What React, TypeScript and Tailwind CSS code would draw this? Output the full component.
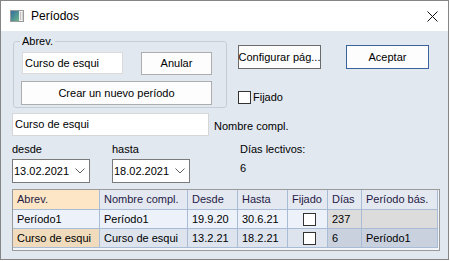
import React from "react";

const Chevron = () => (
  <svg width="10" height="6" viewBox="0 0 10 6" className="block">
    <path d="M0.5 0.5 L5 5 L9.5 0.5" fill="none" stroke="#606060" strokeWidth="1" />
  </svg>
);

const Box = () => <div className="w-[13px] h-[13px] border border-[#333333] bg-white" />;

const cols = ["Abrev.", "Nombre compl.", "Desde", "Hasta", "Fijado", "Días", "Período bás."];

export default function App() {
  const cell = "h-[19px] border-r border-b border-[#a9bcd6] flex items-center pl-[4px] whitespace-nowrap overflow-hidden";
  return (
    <div className="w-[450px] h-[261px] bg-white font-['Liberation_Sans',Arial,sans-serif] text-[11px] text-black leading-none">
      <div className="w-[449px] h-[260px] border border-[#858585] flex flex-col">
        {/* title bar */}
        <div className="h-[30px] bg-white flex items-center shrink-0">
          <svg width="14" height="12" viewBox="0 0 14 12" className="ml-[9px] mt-[0px]">
            <defs>
              <linearGradient id="g" x1="0" y1="0" x2="1" y2="1">
                <stop offset="0" stopColor="#2f6f9f" />
                <stop offset="1" stopColor="#6fb48a" />
              </linearGradient>
            </defs>
            <rect x="0.5" y="0.5" width="13" height="11" fill="#eeeeee" stroke="#9a9a9a" />
            <rect x="1" y="1" width="8" height="10" fill="url(#g)" />
            <rect x="10" y="2" width="1" height="8" fill="#c0c0c0" />
            <rect x="12" y="2" width="1" height="8" fill="#d0d0d0" />
          </svg>
          <span className="ml-[7px] text-[12px]">Períodos</span>
          <svg width="11" height="11" viewBox="0 0 11 11" className="ml-auto mr-[10px]">
            <path d="M0.5 0.5 L10.5 10.5 M10.5 0.5 L0.5 10.5" stroke="#111" strokeWidth="1" />
          </svg>
        </div>
        {/* body */}
        <div className="flex-1 bg-[#e2e8f0] flex flex-col">
          {/* row A */}
          <div className="flex mt-[10px]">
            <div className="relative ml-[12px] w-[214px] h-[67px] border border-[#c6cdd7] rounded-[3px] flex flex-col pl-[8px] pt-[10px]">
              <span className="absolute left-[6px] top-[-6px] bg-[#e2e8f0] px-[2px]">Abrev.</span>
              <div className="flex">
                <div className="w-[101px] h-[22px] bg-white border border-[#dadada] flex items-center pl-[2px]">Curso de esqui</div>
                <div className="ml-[18px] w-[71px] h-[23px] bg-[#fdfdfd] border border-[#adadad] flex items-center justify-center">Anular</div>
              </div>
              <div className="mt-[6px] -ml-[1px] w-[191px] h-[24px] bg-[#fdfdfd] border border-[#adadad] flex items-center justify-center">Crear un nuevo período</div>
            </div>
            <div className="ml-[11px] mt-[4px] flex flex-col">
              <div className="flex">
                <div className="w-[83px] h-[24px] bg-[#fdfdfd] border border-[#6a6a6a] flex items-center justify-center whitespace-nowrap">Configurar pág...</div>
                <div className="ml-[25px] w-[83px] h-[24px] bg-[#fdfdfd] border border-[#3a639b] flex items-center justify-center">Aceptar</div>
              </div>
              <div className="mt-[22px] flex items-center">
                <Box />
                <span className="ml-[2px]">Fijado</span>
              </div>
            </div>
          </div>
          {/* row B */}
          <div className="flex mt-[5px] ml-[11px]">
            <div className="w-[197px] h-[23px] bg-white border border-[#d6d6d6] flex items-center pl-[2px]">Curso de esqui</div>
            <span className="ml-[5px] mt-[8px]">Nombre compl.</span>
          </div>
          {/* row C */}
          <div className="flex mt-[7px] ml-[11px]">
            <div className="flex flex-col w-[78px]">
              <span className="h-[13px] flex items-center">desde</span>
              <div className="mt-[3px] h-[24px] bg-white border border-[#7a7a7a] flex items-center pl-[1px]">
                <span>13.02.2021</span>
                <span className="ml-auto mr-[4px]"><Chevron /></span>
              </div>
            </div>
            <div className="flex flex-col w-[78px] ml-[22px]">
              <span className="h-[13px] flex items-center">hasta</span>
              <div className="mt-[3px] h-[24px] bg-white border border-[#7a7a7a] flex items-center pl-[1px]">
                <span>18.02.2021</span>
                <span className="ml-auto mr-[4px]"><Chevron /></span>
              </div>
            </div>
            <div className="flex flex-col ml-[50px]">
              <span className="h-[13px] flex items-center">Días lectivos:</span>
              <span className="mt-[6px] h-[13px] flex items-center">6</span>
            </div>
          </div>
          {/* grid */}
          <div className="ml-[11px] mt-[6px] w-[428px] h-[62px] border border-[#9a9a9a] bg-[#f3f6fa]">
            <div className="grid grid-cols-[87px_88px_50px_50px_40px_34px_76px]">
              {cols.map((c, i) => (
                <div
                  key={c}
                  className={`${cell} h-[20px] ${i === 0 ? "bg-[#fde6c6] pl-[3px]" : "bg-[#e4e9f1]"} text-[#241a45]`}
                >
                  {c}
                </div>
              ))}
              <div className={`${cell} pl-[3px] bg-[#edf2fa]`}>Período1</div>
              <div className={`${cell} bg-[#edf2fa]`}>Período1</div>
              <div className={`${cell} bg-[#edf2fa]`}>19.9.20</div>
              <div className={`${cell} bg-[#edf2fa]`}>30.6.21</div>
              <div className={`${cell} bg-[#edf2fa] justify-center pl-0`}><Box /></div>
              <div className={`${cell} bg-[#dcdcdc] pl-[3px]`}>237</div>
              <div className={`${cell} bg-[#dcdcdc]`}></div>
              <div className={`${cell} pl-[3px] bg-[#f0dcbd]`}>Curso de esqui</div>
              <div className={`${cell} bg-[#dde4ee]`}>Curso de esqui</div>
              <div className={`${cell} bg-[#dde4ee]`}>13.2.21</div>
              <div className={`${cell} bg-[#dde4ee]`}>18.2.21</div>
              <div className={`${cell} bg-[#dde4ee] justify-center pl-0`}><Box /></div>
              <div className={`${cell} bg-[#c9d1de] pl-[3px]`}>6</div>
              <div className={`${cell} bg-[#c9d1de]`}>Período1</div>
            </div>
          </div>
        </div>
      </div>
    </div>
  );
}
